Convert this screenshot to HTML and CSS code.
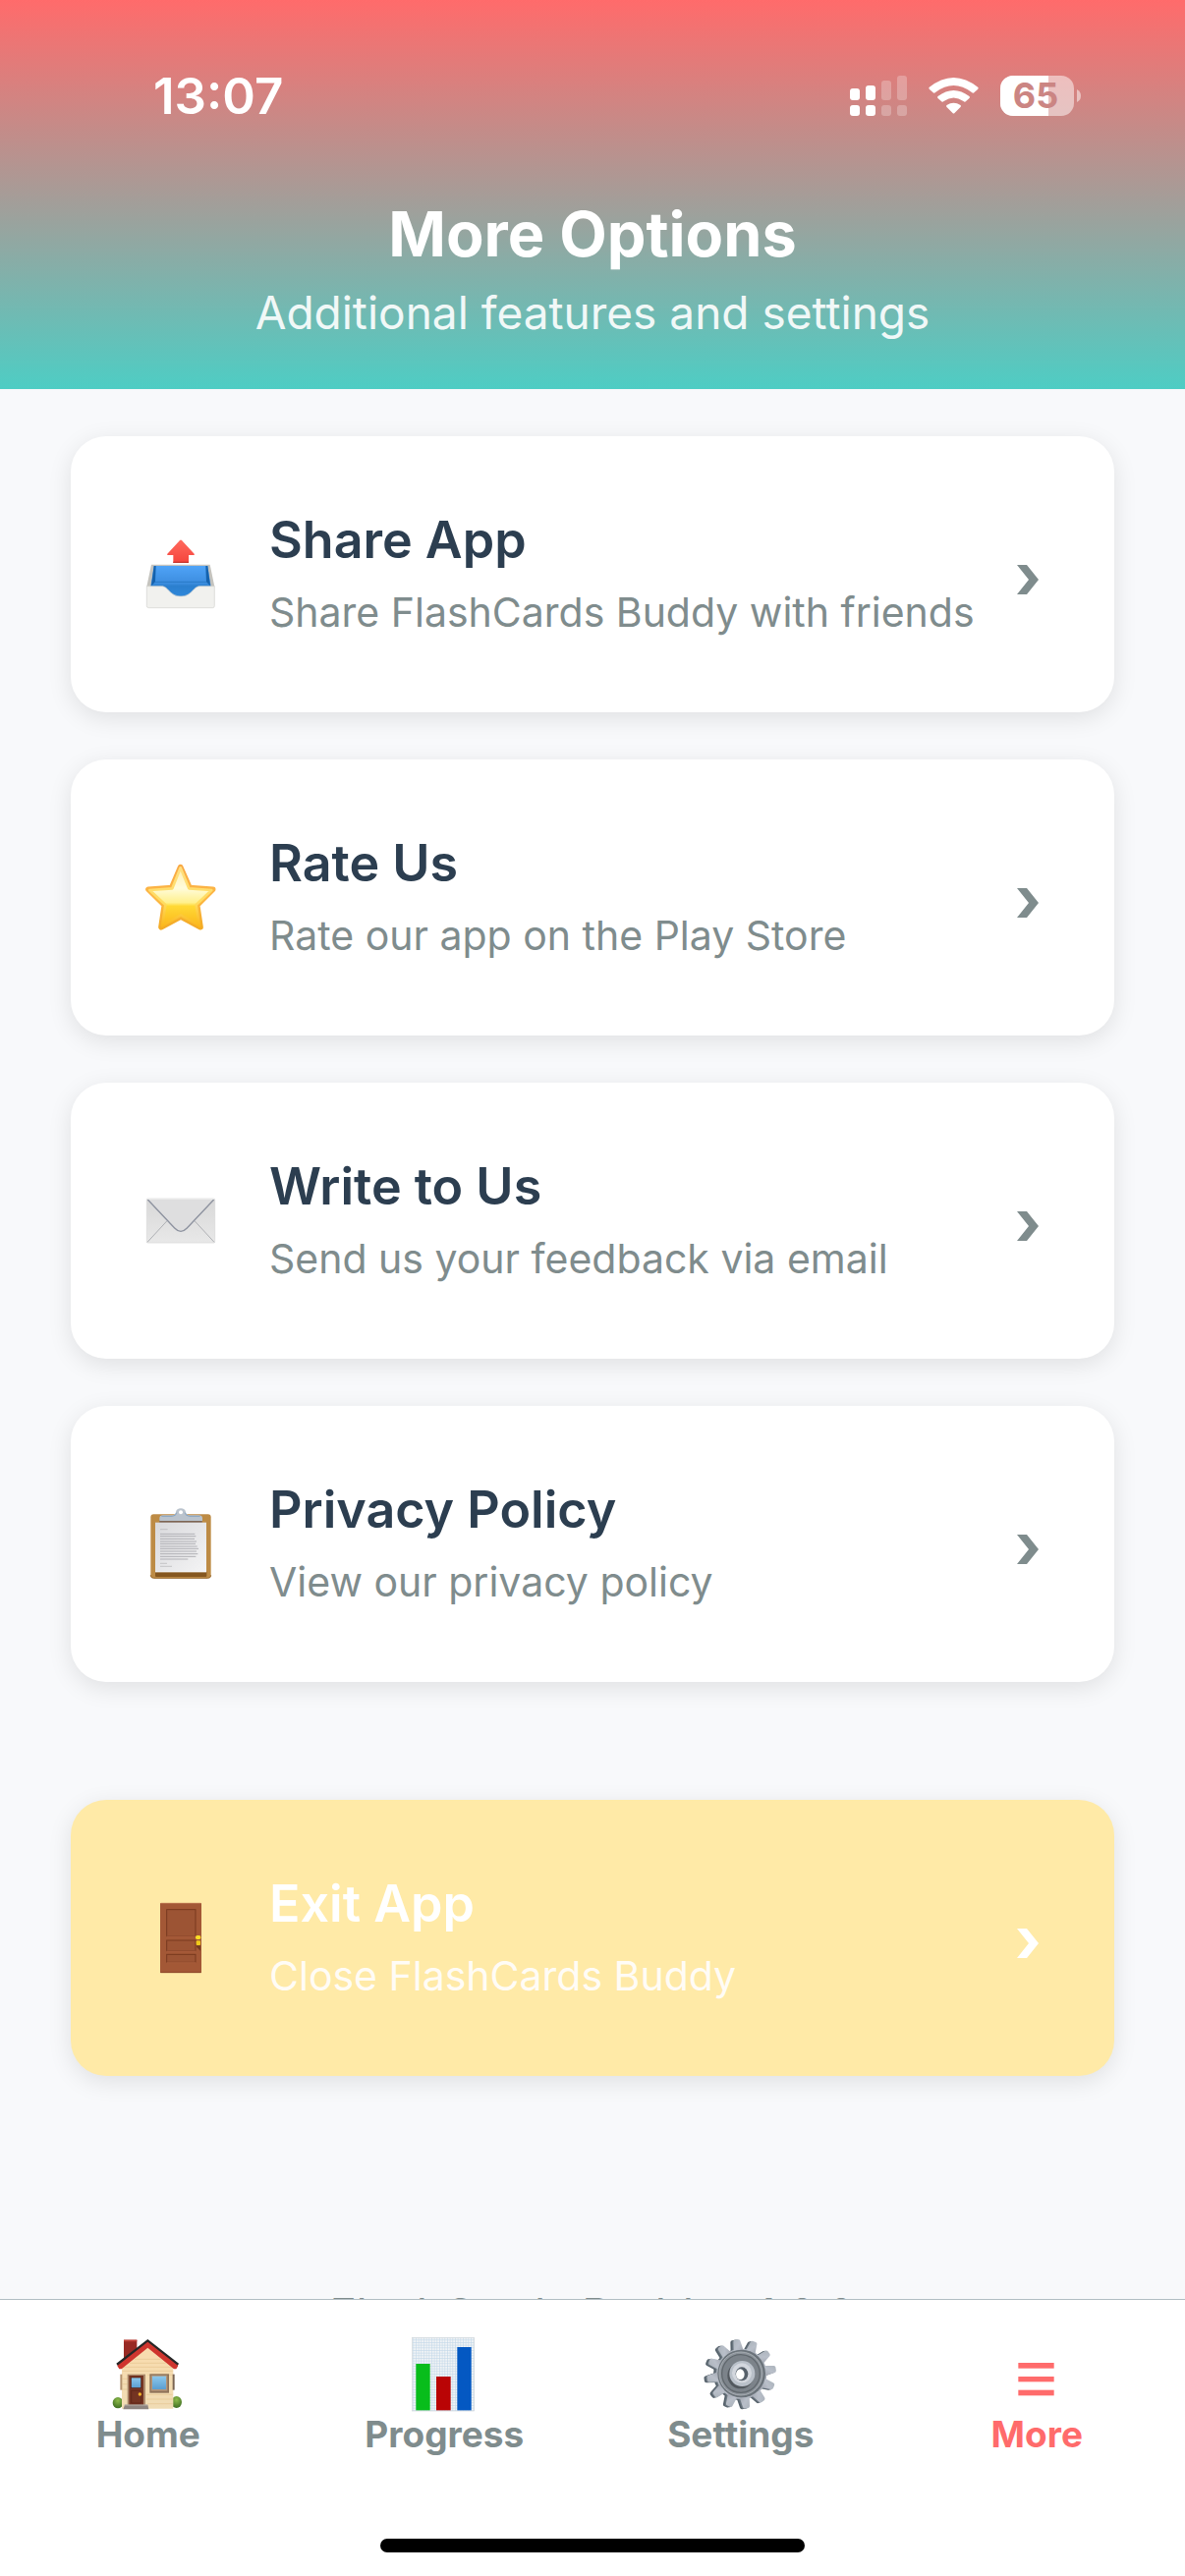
FILE: index.html
```html
<!DOCTYPE html>
<html lang="en">
<head>
  <meta charset="UTF-8">
  <meta name="viewport" content="width=device-width, initial-scale=1.0">
  <title>More Options</title>
  <link rel="stylesheet" href="styles.css">
</head>
<body>
<header class="header">
  <div class="status-bar">
    <span class="status-time">13:07</span>
    <svg class="status-icons" viewBox="0 0 236 60" aria-label="Signal, Wi-Fi, battery">
      <g fill="#fff">
        <rect x="0" y="22" width="10" height="12" rx="3"/>
        <rect x="16" y="19" width="10" height="15" rx="3"/>
        <rect x="0" y="39" width="10" height="11" rx="3"/>
        <rect x="16" y="39" width="10" height="11" rx="3"/>
        <g opacity="0.25">
          <rect x="32" y="14" width="10" height="20" rx="3"/>
          <rect x="48" y="9" width="10" height="25" rx="3"/>
          <rect x="32" y="39" width="10" height="11" rx="3"/>
          <rect x="48" y="39" width="10" height="11" rx="3"/>
        </g>
        <path d="M80.500 21 Q105.500 1 130.500 21 Q131 22 130 23 L126 26.500 Q125 27 124 26 Q105.500 12 87 26 Q86 27 85 26.500 L81 23 Q80 22 80.500 21Z"/>
        <path d="M89.500 30 Q105.500 18 121.500 30 Q122.500 31 121.500 32 L117.500 35.500 Q116.500 36 115.500 35 Q105.500 28 95.500 35 Q94.500 36 93.500 35.500 L89.500 32 Q88.500 31 89.500 30Z"/>
        <path d="M98.500 39 Q105.500 34.500 112.500 39 Q113.500 40 112.500 41 L106.500 47 Q105.500 48 104.500 47 L98.500 41 Q97.500 40 98.500 39Z"/>
        <rect x="153" y="9" width="75" height="41" rx="13" opacity="0.5"/>
        <path d="M166 9 H202 V50 H166 A13 13 0 0 1 153 37 V22 A13 13 0 0 1 166 9Z"/>
        <path d="M231 23 Q235 25 235 29.500 Q235 34 231 36Z" opacity="0.5"/>
      </g>
      <text class="battery-text" x="189" y="42">65</text>
    </svg>
  </div>
  <h1 class="header-title">More Options</h1>
  <p class="header-subtitle">Additional features and settings</p>
</header>

<main class="content">
  <div class="options">
    <button class="card">
      <svg class="card-icon" viewBox="42 44 240 240">
        <defs>
          <linearGradient id="tray" x1="0" y1="0" x2="0" y2="1"><stop offset="0" stop-color="#4fa3f7"/><stop offset="0.500" stop-color="#3d8ee0"/><stop offset="0.600" stop-color="#2b7fce"/><stop offset="1" stop-color="#2f8ade"/></linearGradient>
          <linearGradient id="arrow" x1="0" y1="0" x2="0" y2="1"><stop offset="0" stop-color="#ff6a5e"/><stop offset="1" stop-color="#f5443c"/></linearGradient>
        </defs>
        <path d="M72 133 H251 L265 200 H58Z" fill="#c4c3be"/>
        <path d="M80 137 H244 L254 200 V240 H70 V200Z" fill="url(#tray)"/>
        <path d="M80 137 L86 137 L84 186 L72 198Z M244 137 L238 137 L240 186 L252 198Z" fill="#1562ad"/>
        <path d="M84 186 H240" stroke="#1e6fba" stroke-width="2"/>
        <path d="M58 199 H104 C124 199 128 230 162 230 C196 230 200 199 220 199 H265 V259 Q265 265 259 265 H64 Q58 265 58 259Z" fill="#f1f1ee" stroke="#d2d2ce" stroke-width="2"/>
        <path d="M139 128 V104 H122 Q119 103 121 100 L159 59 Q162 56 165 59 L203 100 Q205 103 202 104 H186 V128Z" fill="url(#arrow)"/>
        <path d="M139 126 H186" stroke="#c53730" stroke-width="4"/>
      </svg>
      <span class="card-text">
        <span class="card-title">Share App</span>
        <span class="card-subtitle">Share FlashCards Buddy with friends</span>
      </span>
      <svg class="chevron" viewBox="0 0 32 42"><path d="M5 11 H15 L27 26 L15 41 H5 L17 26Z"/></svg>
    </button>

    <button class="card">
      <svg class="card-icon" viewBox="42 40 240 240">
        <defs>
          <linearGradient id="star" x1="0" y1="0" x2="0" y2="1"><stop offset="0" stop-color="#ffeeb0"/><stop offset="0.350" stop-color="#fffcdc"/><stop offset="0.600" stop-color="#fff08c"/><stop offset="0.660" stop-color="#ffd935"/><stop offset="1" stop-color="#fbb81c"/></linearGradient>
          <linearGradient id="starEdge" x1="0" y1="0" x2="0" y2="1"><stop offset="0" stop-color="#f9a944"/><stop offset="0.500" stop-color="#fdb845"/><stop offset="1" stop-color="#f3ab26"/></linearGradient>
          <linearGradient id="starGlow" x1="0" y1="0" x2="0" y2="1"><stop offset="0" stop-color="#ffdf80"/><stop offset="0.600" stop-color="#ffdc60"/><stop offset="1" stop-color="#fbb81c"/></linearGradient>
        </defs>
        <path d="M161 66 L189 129 L260 134 L212 182 L222 249 L162 217 L102 249 L112 182 L63 134 L134 129Z" fill="url(#star)" stroke="url(#starEdge)" stroke-width="17" stroke-linejoin="round"/>
        <path d="M161 68 L187 131 L256 136 L209 181 L219 245 L162 213 L105 245 L115 181 L67 136 L136 131Z" fill="url(#star)" stroke="url(#starGlow)" stroke-width="8" stroke-linejoin="round"/>
      </svg>
      <span class="card-text">
        <span class="card-title">Rate Us</span>
        <span class="card-subtitle">Rate our app on the Play Store</span>
      </span>
      <svg class="chevron" viewBox="0 0 32 42"><path d="M5 11 H15 L27 26 L15 41 H5 L17 26Z"/></svg>
    </button>

    <button class="card">
      <svg class="card-icon" viewBox="42 38 240 240">
        <defs>
          <linearGradient id="mail" x1="0" y1="0" x2="0" y2="1"><stop offset="0" stop-color="#d8d8d8"/><stop offset="1" stop-color="#e8e8e8"/></linearGradient>
        </defs>
        <rect x="58" y="89" width="208" height="135" rx="4" fill="url(#mail)" stroke="#d6d6d6" stroke-width="2"/>
        <path d="M60 222 L120 157 M264 222 L204 157" fill="none" stroke="#aeb0b4" stroke-width="3"/>
        <path d="M61 92 L143 179 Q162 199 181 179 L263 92Z" fill="#dededf"/>
        <path d="M61 92 L143 179 Q162 199 181 179 L263 92" fill="none" stroke="#8d929f" stroke-width="4"/>
        <path d="M60 90 H264" stroke="#efefef" stroke-width="3"/>
      </svg>
      <span class="card-text">
        <span class="card-title">Write to Us</span>
        <span class="card-subtitle">Send us your feedback via email</span>
      </span>
      <svg class="chevron" viewBox="0 0 32 42"><path d="M5 11 H15 L27 26 L15 41 H5 L17 26Z"/></svg>
    </button>

    <button class="card">
      <svg class="card-icon" viewBox="42 35 240 240">
        <defs>
          <linearGradient id="paper" x1="0" y1="0" x2="1" y2="1"><stop offset="0" stop-color="#d9d9dc"/><stop offset="1" stop-color="#f4f4f5"/></linearGradient>
        </defs>
        <rect x="70" y="63" width="184" height="195" rx="9" fill="#bd8b45"/>
        <path d="M84 238 H241 V251 Q241 254 238 254 H87 Q84 254 84 251Z" fill="#85571f"/>
        <path d="M70 248 V249 Q70 258 79 258 H245 Q254 258 254 249" fill="none" stroke="#99692e" stroke-width="3"/>
        <rect x="97" y="80" width="130" height="10" fill="#7d6555"/>
        <rect x="84" y="88" width="156" height="151" fill="url(#paper)"/>
        <path d="M84 239 H240" stroke="#fff" stroke-width="2"/>
        <path d="M99 109 H122 M99 213 H120 M99 222 H135" stroke="#b3b3b7" stroke-width="2"/>
        <path d="M99 123 H205 M99 130 H208 M99 138 H204 M99 146 H210 M99 153 H207 M99 161 H212 M99 168 H216 M99 176 H210 M99 184 H214 M99 192 H208 M99 200 H184" stroke="#b0b0b5" stroke-width="3"/>
        <path d="M97 83 V75 Q97 66 108 66 H136 Q146 65 147 56 Q149 45 162 45 Q175 45 177 56 Q178 65 188 66 H216 Q228 66 228 75 V83Z" fill="#bac3cd"/>
        <path d="M103 69 H136 Q148 68 149 58 M221 69 H188 Q176 68 175 58" fill="none" stroke="#86a4c2" stroke-width="3"/>
        <circle cx="162" cy="57" r="6" fill="#fff"/>
      </svg>
      <span class="card-text">
        <span class="card-title">Privacy Policy</span>
        <span class="card-subtitle">View our privacy policy</span>
      </span>
      <svg class="chevron" viewBox="0 0 32 42"><path d="M5 11 H15 L27 26 L15 41 H5 L17 26Z"/></svg>
    </button>
  </div>

  <button class="card card-exit">
    <svg class="card-icon" viewBox="42 38 240 240">
      <rect x="99" y="50" width="126" height="213" rx="2" fill="#a35836"/>
      <path d="M101 51 H223" stroke="#b9714e" stroke-width="3"/>
      <path d="M100 262 H224" stroke="#8a4528" stroke-width="3"/>
      <g fill="#9c5434" stroke="#78391f" stroke-width="3">
        <rect x="119" y="70" width="88" height="81"/>
        <rect x="119" y="164" width="88" height="32"/>
        <rect x="119" y="207" width="88" height="24"/>
      </g>
      <path d="M119 152 H208 M119 197 H208 M119 232 H208" stroke="#bb6d49" stroke-width="2"/>
      <path d="M210 180 H222 V196 L210 184Z" fill="#743a20"/>
      <rect x="207" y="149" width="16" height="12" rx="5" fill="#f9dd25"/>
      <rect x="209" y="165" width="13" height="14" rx="3" fill="#f0ca1b"/>
    </svg>
    <span class="card-text">
      <span class="card-title">Exit App</span>
      <span class="card-subtitle">Close FlashCards Buddy</span>
    </span>
    <svg class="chevron" viewBox="0 0 32 42"><path d="M5 11 H15 L27 26 L15 41 H5 L17 26Z"/></svg>
  </button>

  <p class="version">FlashCards Buddy v1.0.0</p>
</main>

<nav class="tab-bar">
  <div class="tabs">
    <button class="tab">
      <svg class="tab-icon" viewBox="62 168 240 240">
        <defs>
          <linearGradient id="wall" x1="0" y1="0" x2="0" y2="1"><stop offset="0" stop-color="#f9dcae"/><stop offset="1" stop-color="#f0dcb4"/></linearGradient>
          <linearGradient id="glass" x1="0" y1="0" x2="0" y2="1"><stop offset="0" stop-color="#8cc8ec"/><stop offset="1" stop-color="#5a9ed0"/></linearGradient>
          <radialGradient id="bush" cx="0.500" cy="0.300" r="0.700"><stop offset="0" stop-color="#8dbb4a"/><stop offset="1" stop-color="#3f6e22"/></radialGradient>
        </defs>
        <ellipse cx="89" cy="377" rx="16" ry="17" fill="url(#bush)"/>
        <ellipse cx="268" cy="375" rx="16" ry="18" fill="url(#bush)"/>
        <rect x="107" y="185" width="40" height="65" fill="#982a24"/>
        <rect x="107" y="185" width="40" height="5" fill="#c5443a"/>
        <path d="M101 265 L180 205 L258 265 V395 H101Z" fill="url(#wall)"/>
        <path d="M140 244 H220 M125 256 H235 M103 268 H256 M103 280 H256 M180 292 H256 M103 304 H118 M103 320 H118 M103 336 H118 M176 352 H256 M176 366 H256 M180 380 H256" stroke="#e6c68f" stroke-width="2"/>
        <path d="M96 290 H102 V338 H96Z" fill="#b59470"/>
        <path d="M256 290 H262 V338 H256Z" fill="#7b6552"/>
        <path d="M84 257 L180 183 L275 257 L270 266 L180 194 L90 266Z" fill="#262626"/>
        <path d="M87 264 L180 191 L273 264 L267 274 H260 L180 209 L100 274 H93Z" fill="#cf352e"/>
        <rect x="118" y="290" width="55" height="95" fill="#ac8b6c"/>
        <rect x="123" y="294" width="44" height="90" fill="#743422"/>
        <rect x="129" y="300" width="31" height="32" fill="url(#glass)" stroke="#532116" stroke-width="2"/>
        <path d="M130 340 V378 H160 V340Z" fill="none" stroke="#592316" stroke-width="2"/>
        <circle cx="156" cy="351" r="5" fill="#f5b52a"/>
        <path d="M110 383 H180 L183 397 H105Z" fill="#8e8580"/>
        <path d="M109 384 H180" stroke="#b7b0a8" stroke-width="3"/>
        <rect x="186" y="289" width="59" height="58" fill="#8e7258"/>
        <rect x="190" y="293" width="50" height="48" fill="#b4967a"/>
        <rect x="194" y="296" width="42" height="40" fill="url(#glass)"/>
      </svg>
      <span class="tab-label">Home</span>
    </button>
    <button class="tab">
      <svg class="tab-icon" viewBox="967 168 240 240">
        <defs>
          <pattern id="grid" width="8" height="8" patternUnits="userSpaceOnUse"><rect width="8" height="8" fill="#f1f4f6"/><path d="M0 1 H8 M1 0 V8" stroke="#c3d8e8" stroke-width="2"/></pattern>
        </defs>
        <rect x="990" y="178" width="189" height="224" fill="url(#grid)" stroke="#cfd6da" stroke-width="2"/>
        <rect x="1001" y="258" width="43" height="142" fill="#08bd1b"/>
        <rect x="1063" y="297" width="44" height="103" fill="#b90405"/>
        <rect x="1127" y="207" width="43" height="193" fill="#0458c2"/>
      </svg>
      <span class="tab-label">Progress</span>
    </button>
    <button class="tab">
      <svg class="tab-icon" viewBox="161 168 240 240">
        <defs>
          <linearGradient id="steel" x1="0" y1="0" x2="1" y2="1"><stop offset="0" stop-color="#aab2ba"/><stop offset="0.500" stop-color="#b9bfc9"/><stop offset="1" stop-color="#9fa4ae"/></linearGradient>
          <path id="tooth" d="M268 224 L272 188 Q273 183 278 183 H287 Q292 183 293 188 L300 224Z"/>
          <g id="gear">
            <circle cx="283" cy="289" r="77"/>
            <use href="#tooth" transform="rotate(-8 283 289)"/>
            <use href="#tooth" transform="rotate(22 283 289)"/>
            <use href="#tooth" transform="rotate(52 283 289)"/>
            <use href="#tooth" transform="rotate(82 283 289)"/>
            <use href="#tooth" transform="rotate(112 283 289)"/>
            <use href="#tooth" transform="rotate(142 283 289)"/>
            <use href="#tooth" transform="rotate(172 283 289)"/>
            <use href="#tooth" transform="rotate(202 283 289)"/>
            <use href="#tooth" transform="rotate(232 283 289)"/>
            <use href="#tooth" transform="rotate(262 283 289)"/>
            <use href="#tooth" transform="rotate(292 283 289)"/>
            <use href="#tooth" transform="rotate(322 283 289)"/>
          </g>
        </defs>
        <use href="#gear" transform="translate(-9 2)" fill="#56626b"/>
        <use href="#gear" transform="translate(-4 1)" fill="#6c7780"/>
        <use href="#gear" fill="url(#steel)"/>
        <circle cx="283" cy="288" r="73" fill="#6b737a"/>
        <circle cx="281" cy="288" r="66" fill="#8c939a" stroke="#a7adb3" stroke-width="3"/>
        <circle cx="281" cy="288" r="58" fill="#7c838a" stroke="#61686e" stroke-width="4"/>
        <circle cx="280" cy="294" r="40" fill="#53595f"/>
        <circle cx="285" cy="288" r="39" fill="#b9c0c9"/>
        <circle cx="284" cy="286" r="30" fill="#d3d7de"/>
        <ellipse cx="284" cy="289" rx="19" ry="21" fill="#56606a"/>
        <ellipse cx="279" cy="290" rx="13" ry="16" fill="#fff"/>
      </svg>
      <span class="tab-label">Settings</span>
    </button>
    <button class="tab tab-active">
      <svg class="tab-icon" viewBox="1066 168 240 240" fill="currentColor">
        <rect x="1130" y="255" width="109" height="17"/>
        <rect x="1130" y="297" width="109" height="16"/>
        <rect x="1130" y="338" width="109" height="17"/>
      </svg>
      <span class="tab-label">More</span>
    </button>
  </div>
  <div class="home-indicator"></div>
</nav>
</body>
</html>
```
FILE: styles.css
```css
* { font-family: Inter, "Liberation Sans", sans-serif; margin: 0; padding: 0; box-sizing: border-box; }
body { display: flex; flex-direction: column; height: 100vh; background-color: #f8f9fb; }
button { border: none; background: none; cursor: pointer; }

.header { background: linear-gradient(#ff6b6b, #4ecdc4); color: white; padding: 68px 0 48px; text-align: center; }
.status-bar { display: flex; justify-content: space-between; align-items: center; padding: 0 105px 0 156px; height: 60px; }
.status-time { font-size: 51px; font-weight: 600; line-height: 60px; }
.status-icons { width: 236px; height: 60px; }
.battery-text { font-size: 36px; font-weight: 700; fill: #cb8583; text-anchor: middle; }
.header-title { font-size: 63px; font-weight: 700; line-height: 80px; margin-top: 70px; }
.header-subtitle { font-size: 46px; line-height: 60px; margin-top: 10px; opacity: 0.9; }

.content { flex: 1; min-height: 0; overflow: hidden; padding: 48px 72px 0; }
.options { display: flex; flex-direction: column; gap: 48px; }
.card { display: flex; align-items: center; width: 100%; padding: 60px 72px; background-color: white; border-radius: 36px; box-shadow: 0 6px 24px rgba(0, 0, 0, 0.1); text-align: left; color: #7f8c8d; }
.card-icon { width: 80px; height: 80px; flex: none; }
.card-text { flex: 1; display: flex; flex-direction: column; padding: 14px 0 16px 50px; white-space: nowrap; }
.card-title { font-size: 52px; font-weight: 600; line-height: 64px; color: #2c3e50; }
.card-subtitle { font-size: 41px; line-height: 52px; margin-top: 15px; }
.chevron { width: 32px; height: 42px; flex: none; fill: currentColor; }
.card-exit { margin-top: 120px; background-color: #ffeaa7; color: white; }
.card-exit .card-title { color: white; }
.card-exit .card-subtitle { opacity: 0.9; }
.version { margin-top: 216px; text-align: center; font-size: 46px; line-height: 54px; color: #7f8c8d; }

.tab-bar { background-color: white; border-top: 1px solid #b2bec3; padding: 35px 0 24px; }
.tabs { display: flex; }
.tab { flex: 1; display: flex; flex-direction: column; align-items: center; color: #7f8c8d; }
.tab-icon { width: 80px; height: 80px; }
.tab-label { font-size: 37px; font-weight: 700; line-height: 44px; }
.tab-active { color: #ff6b6b; }
.home-indicator { width: 432px; height: 14px; margin: 84px auto 0; border-radius: 8px; background-color: black; }
```
